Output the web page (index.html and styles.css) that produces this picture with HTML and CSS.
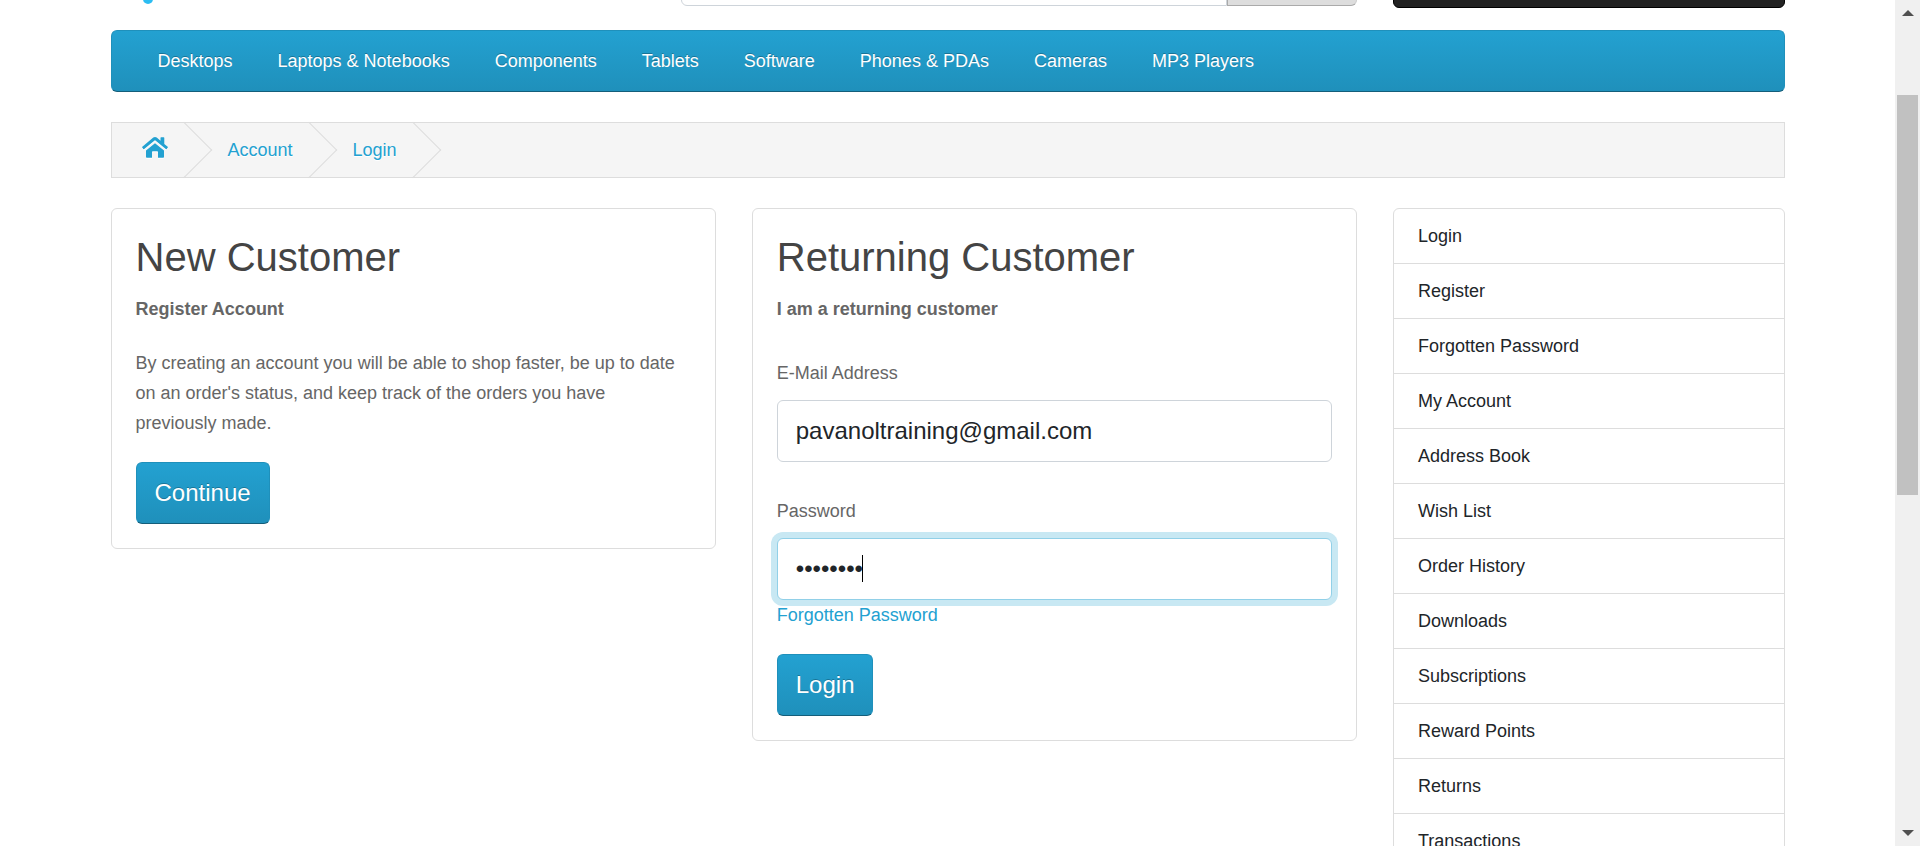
FILE: index.html
```html
<!DOCTYPE html>
<html lang="en">
<head>
<meta charset="utf-8">
<meta name="viewport" content="width=device-width, initial-scale=1">
<title>Account Login</title>
<link rel="stylesheet" href="styles.css">
</head>
<body>
<div class="viewport">
  <div class="page">
    <header class="container header">
      <a class="logo" href="#" aria-label="Home page"><svg class="logo-dot" viewBox="0 0 10 10" aria-hidden="true"><circle cx="5" cy="5" r="5"/></svg></a>
      <form class="search">
        <input class="search-input" type="text" aria-label="Search">
        <button class="search-button" type="button" aria-label="Search"></button>
      </form>
      <button class="cart" type="button" aria-label="Cart"></button>
    </header>

    <div class="container">
      <nav class="menu">
        <a href="#">Desktops</a>
        <a href="#">Laptops &amp; Notebooks</a>
        <a href="#">Components</a>
        <a href="#">Tablets</a>
        <a href="#">Software</a>
        <a href="#">Phones &amp; PDAs</a>
        <a href="#">Cameras</a>
        <a href="#">MP3 Players</a>
      </nav>

      <ul class="breadcrumb">
        <li><a href="#" aria-label="Home"><svg class="home" viewBox="0 0 26 21" aria-hidden="true"><path d="M13 6.200L22 13.600V20a.8.8 0 0 1-.8.800H16v-5.800a.8.8 0 0 0-.8-.8h-4.400a.8.8 0 0 0-.8.8v5.800H4.800A.8.8 0 0 1 4 20v-6.400z"/><path d="M13 0c.7 0 1.200.2 1.700.600L18.500 3.800V.9c0-.4.200-.6.600-.6h2.600c.4 0 .6.200.6.600v6L25.700 9.700c.3.300.3.600.1.900l-1.100 1.400c-.3.300-.6.300-.9.100L13.400 3.500a.6.6 0 0 0-.8 0L2.200 12.100c-.3.200-.6.200-.9-.1L.2 10.600c-.2-.3-.2-.6.100-.9L11.300.6C11.800.2 12.300 0 13 0z"/></svg></a></li>
        <li><a href="#">Account</a></li>
        <li><a href="#">Login</a></li>
      </ul>

      <div class="row">
        <main class="content">
          <section class="card">
            <h2>New Customer</h2>
            <p><strong>Register Account</strong></p>
            <p>By creating an account you will be able to shop faster, be up to date on an order's status, and keep track of the orders you have previously made.</p>
            <button class="button" type="button">Continue</button>
          </section>
          <form class="card">
            <h2>Returning Customer</h2>
            <p><strong>I am a returning customer</strong></p>
            <div class="field">
              <label for="email">E-Mail Address</label>
              <input id="email" type="text" value="pavanoltraining@gmail.com">
            </div>
            <div class="field">
              <label for="password">Password</label>
              <div class="control">
                <input id="password" type="password" value="12345678" autofocus>
                <span class="caret" aria-hidden="true"></span>
              </div>
              <a href="#">Forgotten Password</a>
            </div>
            <button class="button" type="button">Login</button>
          </form>
        </main>
        <aside class="links">
          <a href="#">Login</a>
          <a href="#">Register</a>
          <a href="#">Forgotten Password</a>
          <a href="#">My Account</a>
          <a href="#">Address Book</a>
          <a href="#">Wish List</a>
          <a href="#">Order History</a>
          <a href="#">Downloads</a>
          <a href="#">Subscriptions</a>
          <a href="#">Reward Points</a>
          <a href="#">Returns</a>
          <a href="#">Transactions</a>
        </aside>
      </div>
    </div>
  </div>
  <div class="scrollbar" aria-hidden="true">
    <svg class="arrow" viewBox="0 0 12 6"><path d="M6 0l6 6H0z"/></svg>
    <div class="track"><div class="thumb"></div></div>
    <svg class="arrow" viewBox="0 0 12 6"><path d="M0 0h12L6 6z"/></svg>
  </div>
</div>
</body>
</html>
```
FILE: styles.css
```css
* {
  box-sizing: border-box;
}

body {
  margin: 0;
  font: 18px/30px "Liberation Sans", Arial, sans-serif;
  color: #666;
  background: #fff;
}

a {
  color: #23a1d1;
  text-decoration: none;
}

.viewport {
  display: flex;
  height: 100vh;
  overflow: hidden;
}

.page {
  flex: 1;
  min-width: 0;
}

.container {
  max-width: 1710px;
  margin: 0 auto;
  padding: 0 18px;
}

.header {
  display: grid;
  grid-template-columns: repeat(12, minmax(0, 1fr));
  column-gap: 36px;
  align-items: start;
  height: 30px;
}

.logo {
  grid-column: span 4;
  display: flex;
  padding-left: 32px;
}

.logo-dot {
  width: 10px;
  height: 10px;
  margin-top: -6px;
  fill: #2cbdf2;
}

.search {
  grid-column: span 5;
  display: flex;
  height: 30px;
  margin-top: -24px;
}

.search-input {
  flex: 1;
  min-width: 0;
  border: 1px solid #ced4da;
  border-radius: 6px 0 0 6px;
}

.search-button {
  width: 130px;
  border: 1px solid #aaa;
  border-color: #ccc #ccc #aaa #aaa;
  border-radius: 0 6px 6px 0;
  background: #ddd;
}

.cart {
  grid-column: span 3;
  height: 30px;
  margin-top: -22px;
  border: 1px solid #000;
  border-radius: 6px;
  background: #222;
}

.menu {
  display: flex;
  align-items: center;
  gap: 45px;
  height: 62px;
  padding: 0 46px;
  border: 1px solid #1f90bb;
  border-bottom-color: #145e7a;
  border-radius: 6px;
  background: linear-gradient(#23a1d1, #1f90bb);
}

.menu a {
  color: #fff;
  text-shadow: 0 -1px 0 rgba(0, 0, 0, 0.25);
}

.breadcrumb {
  display: flex;
  height: 56px;
  margin: 30px 0;
  padding: 0;
  border: 1px solid #ddd;
  background: #f5f5f5;
  list-style: none;
}

.breadcrumb li {
  position: relative;
  display: flex;
  align-items: center;
  padding: 0 30px;
  text-shadow: 0 1px 0 #fff;
}

.breadcrumb li::after {
  content: "";
  position: absolute;
  top: 7px;
  right: -6px;
  width: 39px;
  height: 39px;
  border: solid #ddd;
  border-width: 0 1px 1px 0;
  transform: rotate(-45deg);
  pointer-events: none;
}

.home {
  display: block;
  width: 26px;
  height: 21px;
  margin-bottom: 6px;
  fill: #23a1d1;
  filter: drop-shadow(0 1px 0 #fff);
}

.row {
  display: grid;
  grid-template-columns: repeat(12, minmax(0, 1fr));
  column-gap: 36px;
  align-items: start;
}

.content {
  grid-column: span 9;
  display: grid;
  grid-template-columns: 1fr 1fr;
  column-gap: 36px;
  align-items: start;
}

.card {
  padding: 24px;
  border: 1px solid #ddd;
  border-radius: 6px;
}

.card h2 {
  margin: 0 0 12px;
  font-size: 40px;
  font-weight: 400;
  line-height: 49px;
  color: #444;
}

.card p {
  margin: 0 0 24px;
}

.field {
  margin-bottom: 24px;
}

.field label {
  display: block;
  padding: 10px 0 12px;
}

.field input {
  display: block;
  width: 100%;
  height: 62px;
  padding: 0 18px;
  border: 1px solid #ced4da;
  border-radius: 6px;
  font: 24px/36px "Liberation Sans", Arial, sans-serif;
  color: #212529;
  background: #fff;
}

.field input:focus {
  border-color: #91d0e8;
  outline: 0;
  box-shadow: 0 0 0 6px #c8e8f3;
  caret-color: transparent;
}

.control {
  position: relative;
}

.caret {
  position: absolute;
  top: 17px;
  left: 85px;
  width: 1px;
  height: 27px;
  background: #000;
}

.field a {
  display: block;
  position: relative;
}

.button {
  display: block;
  height: 62px;
  padding: 0 18px;
  border: 1px solid #1f90bb;
  border-bottom-color: #145e7a;
  border-radius: 6px;
  font: 24px/36px "Liberation Sans", Arial, sans-serif;
  color: #fff;
  text-shadow: 0 -1px 0 rgba(0, 0, 0, 0.25);
  background: linear-gradient(#23a1d1, #1f90bb);
}

.links {
  grid-column: span 3;
  border: 1px solid #ddd;
  border-radius: 6px;
}

.links a {
  display: block;
  padding: 12px 24px;
  border-bottom: 1px solid #ddd;
  color: #212529;
}

.scrollbar {
  display: flex;
  flex-direction: column;
  align-items: center;
  width: 25px;
  padding: 10px 0;
  background: #f0f0f0;
}

.arrow {
  width: 12px;
  height: 6px;
  fill: #505050;
}

.track {
  flex: 1;
  width: 21px;
  padding: 79px 0;
}

.thumb {
  height: 61%;
  background: #c1c1c1;
}
```
